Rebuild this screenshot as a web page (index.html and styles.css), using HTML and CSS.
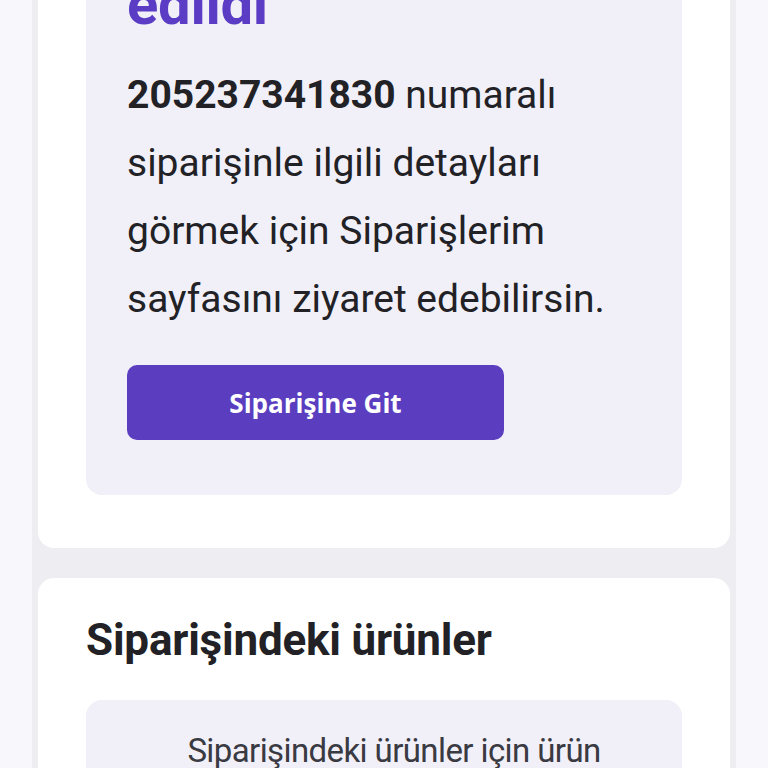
FILE: index.html
```html
<html>
    <head>
        <meta charset="utf-8">
        <link rel="stylesheet" href="styles.css">
    </head>
    <body>
        <div class="page">
            <div class="card">
                <div class="notice">
                    <h1 class="notice-title">Siparişin teslim<br>edildi</h1>
                    <p class="notice-text"><b>205237341830</b> numaralı siparişinle ilgili detayları görmek için Siparişlerim sayfasını ziyaret edebilirsin.</p>
                    <button class="notice-button">Siparişine Git</button>
                </div>
            </div>
            <div class="card products">
                <h2 class="products-title">Siparişindeki ürünler</h2>
                <div class="products-box">
                    Siparişindeki ürünler için ürün değerlendirmesi yapabilirsin.
                </div>
            </div>
        </div>
    </body>
</html>
```

FILE: styles.css
```css
body {
    margin: 0;
    background-color: #f8f8fc;
    font-family: Roboto, "Noto Sans", sans-serif;
    color: #222226;
}
.page {
    width: 692px;
    margin-left: 32px;
    margin-top: -92px;
    padding: 0 6px;
    background-color: #eeeef2;
    display: flex;
    flex-direction: column;
    gap: 30px;
}
.card {
    background: #fff;
    border-radius: 16px;
    padding: 0 48px 53px;
}
.notice {
    background: #f1f0f9;
    border-radius: 16px;
    padding: 0 41px 55px;
}
.notice-title {
    margin: 0;
    font-size: 58px;
    line-height: 64px;
    font-weight: 700;
    color: #5b3cc4;
    letter-spacing: -0.3px;
}
.notice-text {
    margin: 25px 0 32px;
    font-size: 39px;
    line-height: 68px;
}
.notice-text b {
    font-weight: 700;
}
.notice-button {
    display: block;
    width: 377px;
    height: 75px;
    border: none;
    border-radius: 10px;
    background-color: #5a3ebf;
    color: #fff;
    font-family: "Open Sans", sans-serif;
    font-weight: 700;
    font-size: 26px;
}
.products {
    padding-top: 37px;
}
.products-title {
    margin: 0;
    font-size: 44px;
    line-height: 50px;
    font-weight: 700;
    letter-spacing: -0.2px;
}
.products-box {
    margin-top: 35px;
    background: #f1f0f9;
    border-radius: 16px;
    padding: 21px 50px 21px 70px;
    text-align: center;
    font-size: 33px;
    line-height: 60px;
    letter-spacing: -0.6px;
    color: #3a3a42;
}
```
